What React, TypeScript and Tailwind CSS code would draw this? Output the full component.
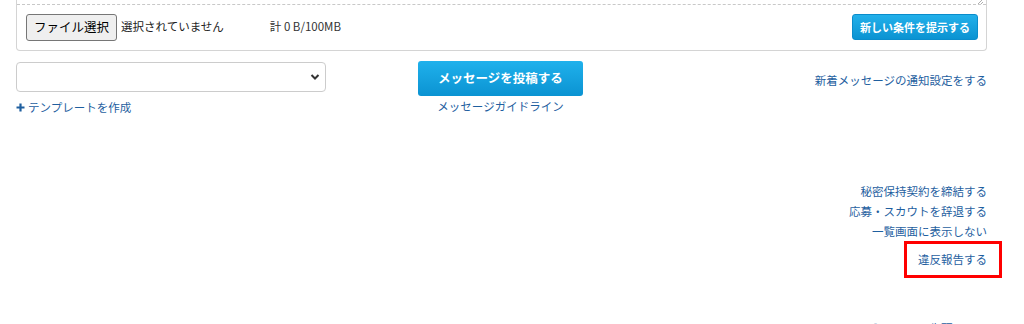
import React from "react";

const font = "font-['Noto_Sans_CJK_JP','Noto_Sans',sans-serif]";

export default function App() {
  return (
    <div className={`w-[1024px] h-[324px] overflow-hidden bg-white text-[11.5px] text-[#333] ${font}`}>
      <div className="ml-4 w-[971px]">
        {/* attachment box */}
        <div className="border border-t-0 border-[#d4d4d4] rounded-b-[4px]">
          <div className="relative h-[5px] border-b border-dashed border-[#c8c8c8]">
            <svg className="absolute right-[2px] top-[-2px]" width="7" height="7" viewBox="0 0 7 7">
              <path d="M1 6 L6 1 M4 6 L6 4" stroke="#999" strokeWidth="0.8" />
            </svg>
          </div>
          <div className="flex items-center h-[45px] pl-[9px] pr-[8px] pb-[1px]">
            <button className="h-[27px] px-[7px] bg-[#efefef] border border-[#767676] rounded-[3px] text-[12.5px] text-black leading-none">
              ファイル選択
            </button>
            <span className="ml-[4px] text-[11.5px] text-[#222]">選択されていません</span>
            <span className="ml-[46px] text-[11.5px] text-[#333]">計 0 B/100MB</span>
            <div className="flex-1" />
            <button className="h-[26px] px-[7px] rounded-[3px] bg-gradient-to-b from-[#22b0ea] to-[#0a93d2] border border-[#0a8ccb] text-white text-[11px] font-bold leading-none">
              新しい条件を提示する
            </button>
          </div>
        </div>

        {/* message actions row */}
        <div className="flex mt-[11px]">
          <div className="w-[310px]">
            <div className="relative h-[30px] border border-[#cccccc] rounded-[4px] bg-white">
              <svg className="absolute right-[5px] top-[10px]" width="10" height="8" viewBox="0 0 10 8">
                <path d="M1.5 2 L5 5.5 L8.5 2" stroke="#333" strokeWidth="2" fill="none" />
              </svg>
            </div>
            <div className="flex items-center mt-[10px] text-[#1f5f9f] text-[11.5px] leading-none">
              <svg width="9" height="9" viewBox="0 0 9 9" className="mr-[3px]">
                <path d="M4.5 0.5 V8.5 M0.5 4.5 H8.5" stroke="#1f5f9f" strokeWidth="2.2" />
              </svg>
              <span>テンプレートを作成</span>
            </div>
          </div>
          <div className="ml-[92px] w-[165px] flex flex-col items-center">
            <button className="w-[165px] h-[35px] rounded-[3px] bg-gradient-to-b from-[#1fb1ec] to-[#0a93d2] text-white text-[12.5px] font-bold leading-none -mt-[1px]">
              メッセージを投稿する
            </button>
            <span className="mt-[3px] text-[11.5px] text-[#1f5f9f] leading-[14px] whitespace-nowrap">メッセージガイドライン</span>
          </div>
          <div className="flex-1 flex justify-end pt-[11px]">
            <span className="text-[11.5px] text-[#1f5f9f] leading-[14px]">新着メッセージの通知設定をする</span>
          </div>
        </div>

        {/* right links */}
        <div className="flex flex-col items-end mt-[70px] text-[11.5px] text-[#1f5f9f] leading-[14px] gap-[6px]">
          <span>秘密保持契約を締結する</span>
          <span>応募・スカウトを辞退する</span>
          <span>一覧画面に表示しない</span>
          <span className="relative mt-[8px]">
            違反報告する
            <span className="absolute left-[-14px] right-[-15px] top-[-11px] bottom-[-12px] border-[3px] border-[#ff0000]" />
          </span>
        </div>

        <div className="flex justify-end mt-[55px] text-[11.5px] text-[#1f5f9f] leading-[14px]">
          <span>● ページの先頭へ戻る</span>
        </div>
      </div>
    </div>
  );
}
